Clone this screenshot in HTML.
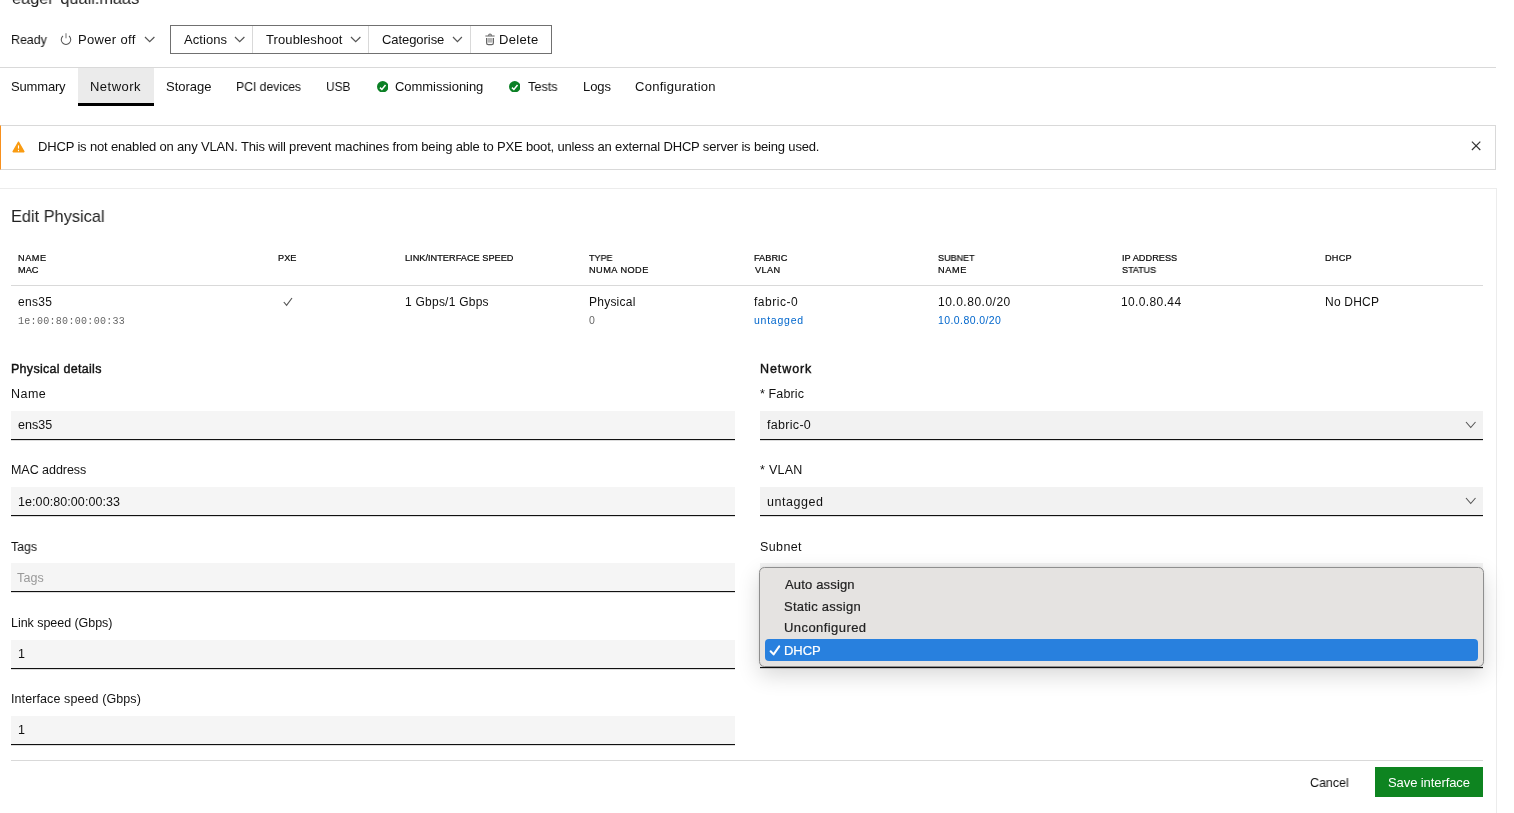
<!DOCTYPE html><html><head><meta charset="utf-8"><style>
html,body{margin:0;padding:0;background:#fff;width:1514px;height:813px;overflow:hidden;position:relative}
body{font-family:"Liberation Sans",sans-serif;color:#111}
.t{position:absolute;white-space:pre;line-height:1;will-change:transform}
.a{position:absolute;box-sizing:border-box}
</style></head><body>
<div class="a" style="left:0px;top:67px;width:1496px;height:1px;background:#d9d9d9"></div>
<div class="a" style="left:78px;top:68px;width:76px;height:35px;background:#ebebeb"></div>
<div class="a" style="left:78px;top:103px;width:76px;height:3px;background:#000"></div>
<div class="a" style="left:170px;top:25px;width:382px;height:29px;border:1px solid #707070"></div>
<div class="a" style="left:252px;top:26px;width:1px;height:27px;background:#d9d9d9"></div>
<div class="a" style="left:368px;top:26px;width:1px;height:27px;background:#d9d9d9"></div>
<div class="a" style="left:470px;top:26px;width:1px;height:27px;background:#d9d9d9"></div>
<svg class="a" style="left:144.3px;top:36.2px;overflow:visible" width="11.4" height="6.7"><polyline points="1,1 5.7,5.7 10.4,1" fill="none" stroke="#555" stroke-width="1.2"/></svg>
<svg class="a" style="left:233.8px;top:36.1px;overflow:visible" width="11.4" height="6.7"><polyline points="1,1 5.7,5.7 10.4,1" fill="none" stroke="#555" stroke-width="1.2"/></svg>
<svg class="a" style="left:349.9px;top:36.2px;overflow:visible" width="11.4" height="6.7"><polyline points="1,1 5.7,5.7 10.4,1" fill="none" stroke="#555" stroke-width="1.2"/></svg>
<svg class="a" style="left:452px;top:36.2px;overflow:visible" width="10.9" height="6.6"><polyline points="1,1 5.45,5.6 9.9,1" fill="none" stroke="#555" stroke-width="1.2"/></svg>
<svg class="a" style="left:59px;top:31px" width="14" height="16"><path d="M4.0,5.0 A4.75,4.75 0 1 0 10.0,5.0" fill="none" stroke="#555" stroke-width="1.05"/><line x1="7" y1="2.2" x2="7" y2="7.2" stroke="#888" stroke-width="1.2"/></svg>
<svg class="a" style="left:484px;top:33px" width="12" height="13"><path d="M4.7,3 V2.3 A1.3,1.3 0 0 1 7.3,2.3 V3" fill="none" stroke="#666" stroke-width="1.1"/><line x1="1.4" y1="3.0" x2="10.6" y2="3.0" stroke="#777" stroke-width="1.2"/><rect x="3.6" y="5" width="4.8" height="4.6" fill="#b5b5b5"/><path d="M2.6,5 V9.9 Q2.6,11.6 4.4,11.6 H7.6 Q9.4,11.6 9.4,9.9 V5" fill="none" stroke="#666" stroke-width="1.2"/></svg>
<svg class="a" style="left:376.75px;top:80.55px" width="11.5" height="11.5" viewBox="0 0 12 12"><circle cx="6" cy="6" r="6" fill="#0b8025"/><polyline points="3.1,6.9 5.1,8.8 8.9,4.2" fill="none" stroke="#fff" stroke-width="1.6"/></svg>
<svg class="a" style="left:508.95000000000005px;top:80.55px" width="11.5" height="11.5" viewBox="0 0 12 12"><circle cx="6" cy="6" r="6" fill="#0b8025"/><polyline points="3.1,6.9 5.1,8.8 8.9,4.2" fill="none" stroke="#fff" stroke-width="1.6"/></svg>
<div class="a" style="left:0px;top:125px;width:1496px;height:45px;border:1px solid #d9d9d9;border-left:1px solid #f7901e"></div>
<svg class="a" style="left:12px;top:140.5px" width="13" height="12" viewBox="0 0 13 12"><path d="M6.5,1.3 L11.8,10.6 L1.2,10.6 Z" fill="#f99b11" stroke="#f99b11" stroke-width="1.6" stroke-linejoin="round"/><rect x="5.95" y="4.4" width="1.1" height="3.2" fill="#fff"/><rect x="5.95" y="8.8" width="1.1" height="1.4" fill="#fff"/></svg>
<svg class="a" style="left:1471px;top:140.5px" width="10" height="10"><line x1="0.9" y1="0.6" x2="9.3" y2="9.0" stroke="#333" stroke-width="1.15"/><line x1="9.3" y1="0.6" x2="0.9" y2="9.0" stroke="#333" stroke-width="1.15"/></svg>
<div class="a" style="left:0px;top:188px;width:1497px;height:700px;border-top:1px solid #ececec;border-right:1px solid #ececec"></div>
<div class="a" style="left:11px;top:285px;width:1472px;height:1px;background:#d9d9d9"></div>
<svg class="a" style="left:283px;top:297px" width="10" height="10"><polyline points="0.8,5.0 3.6,8.4 9.0,1.0" fill="none" stroke="#555" stroke-width="1.15"/></svg>
<div class="a" style="left:11px;top:411px;width:724px;height:28px;background:#f5f5f5"></div>
<div class="a" style="left:11px;top:439px;width:724px;height:1px;background:#111"></div>
<div class="a" style="left:11px;top:440px;width:724px;height:1px;background:#111;opacity:.15"></div>
<div class="a" style="left:11px;top:487px;width:724px;height:28px;background:#f5f5f5"></div>
<div class="a" style="left:11px;top:515px;width:724px;height:1px;background:#111"></div>
<div class="a" style="left:11px;top:516px;width:724px;height:1px;background:#111;opacity:.15"></div>
<div class="a" style="left:11px;top:563px;width:724px;height:28px;background:#f5f5f5"></div>
<div class="a" style="left:11px;top:591px;width:724px;height:1px;background:#111"></div>
<div class="a" style="left:11px;top:592px;width:724px;height:1px;background:#111;opacity:.15"></div>
<div class="a" style="left:11px;top:640px;width:724px;height:28px;background:#f5f5f5"></div>
<div class="a" style="left:11px;top:668px;width:724px;height:1px;background:#111"></div>
<div class="a" style="left:11px;top:669px;width:724px;height:1px;background:#111;opacity:.15"></div>
<div class="a" style="left:11px;top:716px;width:724px;height:28px;background:#f5f5f5"></div>
<div class="a" style="left:11px;top:744px;width:724px;height:1px;background:#111"></div>
<div class="a" style="left:11px;top:745px;width:724px;height:1px;background:#111;opacity:.15"></div>
<div class="a" style="left:760px;top:411px;width:723px;height:28px;background:#f2f2f2"></div>
<div class="a" style="left:760px;top:439px;width:723px;height:1px;background:#111"></div>
<div class="a" style="left:760px;top:440px;width:723px;height:1px;background:#111;opacity:.15"></div>
<div class="a" style="left:760px;top:487px;width:723px;height:28px;background:#f2f2f2"></div>
<div class="a" style="left:760px;top:515px;width:723px;height:1px;background:#111"></div>
<div class="a" style="left:760px;top:516px;width:723px;height:1px;background:#111;opacity:.15"></div>
<div class="a" style="left:760px;top:563px;width:723px;height:104px;background:#f2f2f2"></div>
<div class="a" style="left:760px;top:667px;width:723px;height:1px;background:#111"></div>
<div class="a" style="left:760px;top:668px;width:723px;height:1px;background:#111;opacity:.15"></div>
<svg class="a" style="left:1465px;top:420.5px;overflow:visible" width="11.5" height="7.5"><polyline points="1,1 5.75,6.5 10.5,1" fill="none" stroke="#555" stroke-width="1.1"/></svg>
<svg class="a" style="left:1465px;top:497px;overflow:visible" width="11.5" height="7.5"><polyline points="1,1 5.75,6.5 10.5,1" fill="none" stroke="#555" stroke-width="1.1"/></svg>
<div class="a" style="left:759px;top:567px;width:725px;height:99.5px;border:1px solid #8f8f8f;border-radius:5.5px;background:#e5e3e1;box-shadow:0 8px 22px rgba(0,0,0,0.16),0 0 3px rgba(0,0,0,0.08)"></div>
<div class="a" style="left:765px;top:639px;width:713px;height:22px;background:#2880de;border-radius:4px"></div>
<svg class="a" style="left:769px;top:645px" width="12" height="11"><polyline points="1.6,6.2 4.6,9.4 10.2,1.4" fill="none" stroke="#fff" stroke-width="2" stroke-linecap="round" stroke-linejoin="round"/></svg>
<div class="a" style="left:11px;top:760px;width:1472px;height:1px;background:#d9d9d9"></div>
<div class="a" style="left:1375px;top:767px;width:108px;height:30px;background:#0e8420"></div>
<span class="t" id="t0" style="left:12.01px;top:-9.60px;font-size:17px;font-weight:400;color:#222;font-family:'Liberation Sans', sans-serif;letter-spacing:0.000px;transform:scaleX(0.9602);transform-origin:0 0;">eager  quail.maas</span>
<span class="t" id="t1" style="left:11.32px;top:32.80px;font-size:13px;font-weight:400;color:#111;font-family:'Liberation Sans', sans-serif;letter-spacing:0.000px;transform:scaleX(0.9560);transform-origin:0 0;">Ready</span>
<span class="t" id="t2" style="left:78.41px;top:33.00px;font-size:13px;font-weight:400;color:#111;font-family:'Liberation Sans', sans-serif;letter-spacing:0.338px;transform:scaleX(1.0000);transform-origin:0 0;">Power off</span>
<span class="t" id="t3" style="left:183.65px;top:33.00px;font-size:13px;font-weight:400;color:#111;font-family:'Liberation Sans', sans-serif;letter-spacing:0.076px;transform:scaleX(1.0000);transform-origin:0 0;">Actions</span>
<span class="t" id="t4" style="left:266.32px;top:33.00px;font-size:13px;font-weight:400;color:#111;font-family:'Liberation Sans', sans-serif;letter-spacing:0.098px;transform:scaleX(1.0000);transform-origin:0 0;">Troubleshoot</span>
<span class="t" id="t5" style="left:381.75px;top:33.00px;font-size:13px;font-weight:400;color:#111;font-family:'Liberation Sans', sans-serif;letter-spacing:-0.064px;transform:scaleX(1.0000);transform-origin:0 0;">Categorise</span>
<span class="t" id="t6" style="left:498.90px;top:33.00px;font-size:13px;font-weight:400;color:#111;font-family:'Liberation Sans', sans-serif;letter-spacing:0.317px;transform:scaleX(1.0000);transform-origin:0 0;">Delete</span>
<span class="t" id="t7" style="left:11.07px;top:79.60px;font-size:13px;font-weight:400;color:#111;font-family:'Liberation Sans', sans-serif;letter-spacing:-0.170px;transform:scaleX(1.0000);transform-origin:0 0;">Summary</span>
<span class="t" id="t8" style="left:90.08px;top:79.60px;font-size:13px;font-weight:400;color:#111;font-family:'Liberation Sans', sans-serif;letter-spacing:0.481px;transform:scaleX(1.0000);transform-origin:0 0;">Network</span>
<span class="t" id="t9" style="left:165.69px;top:79.60px;font-size:13px;font-weight:400;color:#111;font-family:'Liberation Sans', sans-serif;letter-spacing:-0.002px;transform:scaleX(1.0000);transform-origin:0 0;">Storage</span>
<span class="t" id="t10" style="left:236.11px;top:79.60px;font-size:13px;font-weight:400;color:#111;font-family:'Liberation Sans', sans-serif;letter-spacing:0.000px;transform:scaleX(0.9372);transform-origin:0 0;">PCI devices</span>
<span class="t" id="t11" style="left:325.93px;top:79.60px;font-size:13px;font-weight:400;color:#111;font-family:'Liberation Sans', sans-serif;letter-spacing:0.000px;transform:scaleX(0.9127);transform-origin:0 0;">USB</span>
<span class="t" id="t12" style="left:395.43px;top:79.60px;font-size:13px;font-weight:400;color:#111;font-family:'Liberation Sans', sans-serif;letter-spacing:-0.045px;transform:scaleX(1.0000);transform-origin:0 0;">Commissioning</span>
<span class="t" id="t13" style="left:528.31px;top:79.60px;font-size:13px;font-weight:400;color:#111;font-family:'Liberation Sans', sans-serif;letter-spacing:0.000px;transform:scaleX(0.9769);transform-origin:0 0;">Tests</span>
<span class="t" id="t14" style="left:582.94px;top:79.60px;font-size:13px;font-weight:400;color:#111;font-family:'Liberation Sans', sans-serif;letter-spacing:-0.071px;transform:scaleX(1.0000);transform-origin:0 0;">Logs</span>
<span class="t" id="t15" style="left:635.43px;top:79.60px;font-size:13px;font-weight:400;color:#111;font-family:'Liberation Sans', sans-serif;letter-spacing:0.265px;transform:scaleX(1.0000);transform-origin:0 0;">Configuration</span>
<span class="t" id="t16" style="left:37.88px;top:139.91px;font-size:13px;font-weight:400;color:#111;font-family:'Liberation Sans', sans-serif;letter-spacing:-0.166px;transform:scaleX(1.0000);transform-origin:0 0;">DHCP is not enabled on any VLAN. This will prevent machines from being able to PXE boot, unless an external DHCP server is being used.</span>
<span class="t" id="t17" style="left:11.25px;top:208.00px;font-size:17px;font-weight:400;color:#222;font-family:'Liberation Sans', sans-serif;letter-spacing:0.000px;transform:scaleX(0.9623);transform-origin:0 0;">Edit Physical</span>
<span class="t" id="t18" style="left:18.48px;top:253.91px;font-size:9.2px;font-weight:400;color:#111;font-family:'Liberation Sans', sans-serif;letter-spacing:0.543px;transform:scaleX(1.0000);transform-origin:0 0;-webkit-text-stroke:0.22px #000;">NAME</span>
<span class="t" id="t19" style="left:17.53px;top:265.71px;font-size:9.2px;font-weight:400;color:#111;font-family:'Liberation Sans', sans-serif;letter-spacing:0.000px;transform:scaleX(1.0000);transform-origin:0 0;-webkit-text-stroke:0.22px #000;">MAC</span>
<span class="t" id="t20" style="left:277.58px;top:253.91px;font-size:9.2px;font-weight:400;color:#111;font-family:'Liberation Sans', sans-serif;letter-spacing:0.000px;transform:scaleX(0.9988);transform-origin:0 0;-webkit-text-stroke:0.22px #000;">PXE</span>
<span class="t" id="t21" style="left:405.33px;top:253.91px;font-size:9.2px;font-weight:400;color:#111;font-family:'Liberation Sans', sans-serif;letter-spacing:0.012px;transform:scaleX(1.0000);transform-origin:0 0;-webkit-text-stroke:0.22px #000;">LINK/INTERFACE SPEED</span>
<span class="t" id="t22" style="left:589.31px;top:253.91px;font-size:9.2px;font-weight:400;color:#111;font-family:'Liberation Sans', sans-serif;letter-spacing:0.000px;transform:scaleX(0.9806);transform-origin:0 0;-webkit-text-stroke:0.22px #000;">TYPE</span>
<span class="t" id="t23" style="left:588.98px;top:265.71px;font-size:9.2px;font-weight:400;color:#111;font-family:'Liberation Sans', sans-serif;letter-spacing:0.458px;transform:scaleX(1.0000);transform-origin:0 0;-webkit-text-stroke:0.22px #000;">NUMA NODE</span>
<span class="t" id="t24" style="left:753.63px;top:253.91px;font-size:9.2px;font-weight:400;color:#111;font-family:'Liberation Sans', sans-serif;letter-spacing:0.019px;transform:scaleX(1.0000);transform-origin:0 0;-webkit-text-stroke:0.22px #000;">FABRIC</span>
<span class="t" id="t25" style="left:755.09px;top:265.71px;font-size:9.2px;font-weight:400;color:#111;font-family:'Liberation Sans', sans-serif;letter-spacing:0.398px;transform:scaleX(1.0000);transform-origin:0 0;-webkit-text-stroke:0.22px #000;">VLAN</span>
<span class="t" id="t26" style="left:938.14px;top:253.90px;font-size:9.2px;font-weight:400;color:#111;font-family:'Liberation Sans', sans-serif;letter-spacing:0.000px;transform:scaleX(0.9798);transform-origin:0 0;-webkit-text-stroke:0.22px #000;">SUBNET</span>
<span class="t" id="t27" style="left:937.55px;top:265.71px;font-size:9.2px;font-weight:400;color:#111;font-family:'Liberation Sans', sans-serif;letter-spacing:0.643px;transform:scaleX(1.0000);transform-origin:0 0;-webkit-text-stroke:0.22px #000;">NAME</span>
<span class="t" id="t28" style="left:1121.91px;top:253.91px;font-size:9.2px;font-weight:400;color:#111;font-family:'Liberation Sans', sans-serif;letter-spacing:0.029px;transform:scaleX(1.0000);transform-origin:0 0;-webkit-text-stroke:0.22px #000;">IP ADDRESS</span>
<span class="t" id="t29" style="left:1122.29px;top:265.71px;font-size:9.2px;font-weight:400;color:#111;font-family:'Liberation Sans', sans-serif;letter-spacing:0.000px;transform:scaleX(0.9781);transform-origin:0 0;-webkit-text-stroke:0.22px #000;">STATUS</span>
<span class="t" id="t30" style="left:1325.18px;top:253.91px;font-size:9.2px;font-weight:400;color:#111;font-family:'Liberation Sans', sans-serif;letter-spacing:0.209px;transform:scaleX(1.0000);transform-origin:0 0;-webkit-text-stroke:0.22px #000;">DHCP</span>
<span class="t" id="t31" style="left:18.06px;top:295.71px;font-size:12px;font-weight:400;color:#111;font-family:'Liberation Sans', sans-serif;letter-spacing:0.305px;transform:scaleX(1.0000);transform-origin:0 0;">ens35</span>
<span class="t" id="t32" style="left:17.85px;top:316.70px;font-size:10px;font-weight:400;color:#666;font-family:'Liberation Mono', monospace;letter-spacing:0.302px;transform:scaleX(1.0000);transform-origin:0 0;">1e:00:80:00:00:33</span>
<span class="t" id="t33" style="left:404.52px;top:295.71px;font-size:12px;font-weight:400;color:#111;font-family:'Liberation Sans', sans-serif;letter-spacing:0.239px;transform:scaleX(1.0000);transform-origin:0 0;">1 Gbps/1 Gbps</span>
<span class="t" id="t34" style="left:588.50px;top:295.71px;font-size:12px;font-weight:400;color:#111;font-family:'Liberation Sans', sans-serif;letter-spacing:0.234px;transform:scaleX(1.0000);transform-origin:0 0;">Physical</span>
<span class="t" id="t35" style="left:588.67px;top:314.71px;font-size:10.5px;font-weight:400;color:#666;font-family:'Liberation Sans', sans-serif;letter-spacing:0.000px;transform:scaleX(1.0000);transform-origin:0 0;">0</span>
<span class="t" id="t36" style="left:754.43px;top:295.71px;font-size:12px;font-weight:400;color:#111;font-family:'Liberation Sans', sans-serif;letter-spacing:0.520px;transform:scaleX(1.0000);transform-origin:0 0;">fabric-0</span>
<span class="t" id="t37" style="left:753.71px;top:314.71px;font-size:10.5px;font-weight:400;color:#0066cc;font-family:'Liberation Sans', sans-serif;letter-spacing:0.756px;transform:scaleX(1.0000);transform-origin:0 0;">untagged</span>
<span class="t" id="t38" style="left:938.06px;top:295.71px;font-size:12px;font-weight:400;color:#111;font-family:'Liberation Sans', sans-serif;letter-spacing:0.502px;transform:scaleX(1.0000);transform-origin:0 0;">10.0.80.0/20</span>
<span class="t" id="t39" style="left:937.94px;top:314.70px;font-size:10.5px;font-weight:400;color:#0066cc;font-family:'Liberation Sans', sans-serif;letter-spacing:0.414px;transform:scaleX(1.0000);transform-origin:0 0;">10.0.80.0/20</span>
<span class="t" id="t40" style="left:1121.16px;top:295.71px;font-size:12px;font-weight:400;color:#111;font-family:'Liberation Sans', sans-serif;letter-spacing:0.373px;transform:scaleX(1.0000);transform-origin:0 0;">10.0.80.44</span>
<span class="t" id="t41" style="left:1324.50px;top:295.71px;font-size:12px;font-weight:400;color:#111;font-family:'Liberation Sans', sans-serif;letter-spacing:0.209px;transform:scaleX(1.0000);transform-origin:0 0;">No DHCP</span>
<span class="t" id="t42" style="left:10.66px;top:362.71px;font-size:12.5px;font-weight:400;color:#111;font-family:'Liberation Sans', sans-serif;letter-spacing:0.282px;transform:scaleX(1.0000);transform-origin:0 0;-webkit-text-stroke:0.4px #111;">Physical details</span>
<span class="t" id="t43" style="left:760.13px;top:362.71px;font-size:12.5px;font-weight:400;color:#111;font-family:'Liberation Sans', sans-serif;letter-spacing:0.916px;transform:scaleX(1.0000);transform-origin:0 0;-webkit-text-stroke:0.4px #111;">Network</span>
<span class="t" id="t44" style="left:10.66px;top:388.00px;font-size:12.5px;font-weight:400;color:#111;font-family:'Liberation Sans', sans-serif;letter-spacing:0.465px;transform:scaleX(1.0000);transform-origin:0 0;">Name</span>
<span class="t" id="t45" style="left:11.18px;top:464.00px;font-size:12.5px;font-weight:400;color:#111;font-family:'Liberation Sans', sans-serif;letter-spacing:-0.043px;transform:scaleX(1.0000);transform-origin:0 0;">MAC address</span>
<span class="t" id="t46" style="left:11.42px;top:541.00px;font-size:12.5px;font-weight:400;color:#111;font-family:'Liberation Sans', sans-serif;letter-spacing:0.000px;transform:scaleX(0.9811);transform-origin:0 0;">Tags</span>
<span class="t" id="t47" style="left:11.18px;top:617.01px;font-size:12.5px;font-weight:400;color:#111;font-family:'Liberation Sans', sans-serif;letter-spacing:-0.041px;transform:scaleX(1.0000);transform-origin:0 0;">Link speed (Gbps)</span>
<span class="t" id="t48" style="left:10.71px;top:693.01px;font-size:12.5px;font-weight:400;color:#111;font-family:'Liberation Sans', sans-serif;letter-spacing:0.097px;transform:scaleX(1.0000);transform-origin:0 0;">Interface speed (Gbps)</span>
<span class="t" id="t49" style="left:759.54px;top:388.00px;font-size:12.5px;font-weight:400;color:#111;font-family:'Liberation Sans', sans-serif;letter-spacing:0.124px;transform:scaleX(1.0000);transform-origin:0 0;">* Fabric</span>
<span class="t" id="t50" style="left:760.48px;top:464.00px;font-size:12.5px;font-weight:400;color:#111;font-family:'Liberation Sans', sans-serif;letter-spacing:0.281px;transform:scaleX(1.0000);transform-origin:0 0;">* VLAN</span>
<span class="t" id="t51" style="left:759.50px;top:541.00px;font-size:12.5px;font-weight:400;color:#111;font-family:'Liberation Sans', sans-serif;letter-spacing:0.395px;transform:scaleX(1.0000);transform-origin:0 0;">Subnet</span>
<span class="t" id="t52" style="left:18.48px;top:418.61px;font-size:12.5px;font-weight:400;color:#111;font-family:'Liberation Sans', sans-serif;letter-spacing:0.000px;transform:scaleX(1.0022);transform-origin:0 0;">ens35</span>
<span class="t" id="t53" style="left:17.87px;top:495.60px;font-size:12.5px;font-weight:400;color:#111;font-family:'Liberation Sans', sans-serif;letter-spacing:0.078px;transform:scaleX(1.0000);transform-origin:0 0;">1e:00:80:00:00:33</span>
<span class="t" id="t54" style="left:17.22px;top:571.71px;font-size:12.5px;font-weight:400;color:#999;font-family:'Liberation Sans', sans-serif;letter-spacing:0.153px;transform:scaleX(1.0000);transform-origin:0 0;">Tags</span>
<span class="t" id="t55" style="left:17.90px;top:647.80px;font-size:12.5px;font-weight:400;color:#111;font-family:'Liberation Sans', sans-serif;letter-spacing:0.000px;transform:scaleX(1.0000);transform-origin:0 0;">1</span>
<span class="t" id="t56" style="left:17.90px;top:724.00px;font-size:12.5px;font-weight:400;color:#111;font-family:'Liberation Sans', sans-serif;letter-spacing:0.000px;transform:scaleX(1.0000);transform-origin:0 0;">1</span>
<span class="t" id="t57" style="left:766.84px;top:418.60px;font-size:12.5px;font-weight:400;color:#111;font-family:'Liberation Sans', sans-serif;letter-spacing:0.306px;transform:scaleX(1.0000);transform-origin:0 0;">fabric-0</span>
<span class="t" id="t58" style="left:766.55px;top:495.60px;font-size:12.5px;font-weight:400;color:#111;font-family:'Liberation Sans', sans-serif;letter-spacing:0.557px;transform:scaleX(1.0000);transform-origin:0 0;">untagged</span>
<span class="t" id="t59" style="left:784.78px;top:577.91px;font-size:13px;font-weight:400;color:#222;font-family:'Liberation Sans', sans-serif;letter-spacing:0.167px;transform:scaleX(1.0000);transform-origin:0 0;-webkit-text-stroke:0.2px #222;">Auto assign</span>
<span class="t" id="t60" style="left:784.31px;top:599.81px;font-size:13px;font-weight:400;color:#222;font-family:'Liberation Sans', sans-serif;letter-spacing:0.246px;transform:scaleX(1.0000);transform-origin:0 0;-webkit-text-stroke:0.2px #222;">Static assign</span>
<span class="t" id="t61" style="left:783.81px;top:621.41px;font-size:13px;font-weight:400;color:#222;font-family:'Liberation Sans', sans-serif;letter-spacing:0.433px;transform:scaleX(1.0000);transform-origin:0 0;-webkit-text-stroke:0.2px #222;">Unconfigured</span>
<span class="t" id="t62" style="left:783.51px;top:643.61px;font-size:13px;font-weight:400;color:#fff;font-family:'Liberation Sans', sans-serif;letter-spacing:-0.050px;transform:scaleX(1.0000);transform-origin:0 0;-webkit-text-stroke:0.2px #fff;">DHCP</span>
<span class="t" id="t63" style="left:1310.13px;top:776.31px;font-size:13px;font-weight:400;color:#111;font-family:'Liberation Sans', sans-serif;letter-spacing:0.000px;transform:scaleX(0.9594);transform-origin:0 0;">Cancel</span>
<span class="t" id="t64" style="left:1387.83px;top:776.30px;font-size:13px;font-weight:400;color:#fff;font-family:'Liberation Sans', sans-serif;letter-spacing:-0.088px;transform:scaleX(1.0000);transform-origin:0 0;">Save interface</span>
</body></html>
